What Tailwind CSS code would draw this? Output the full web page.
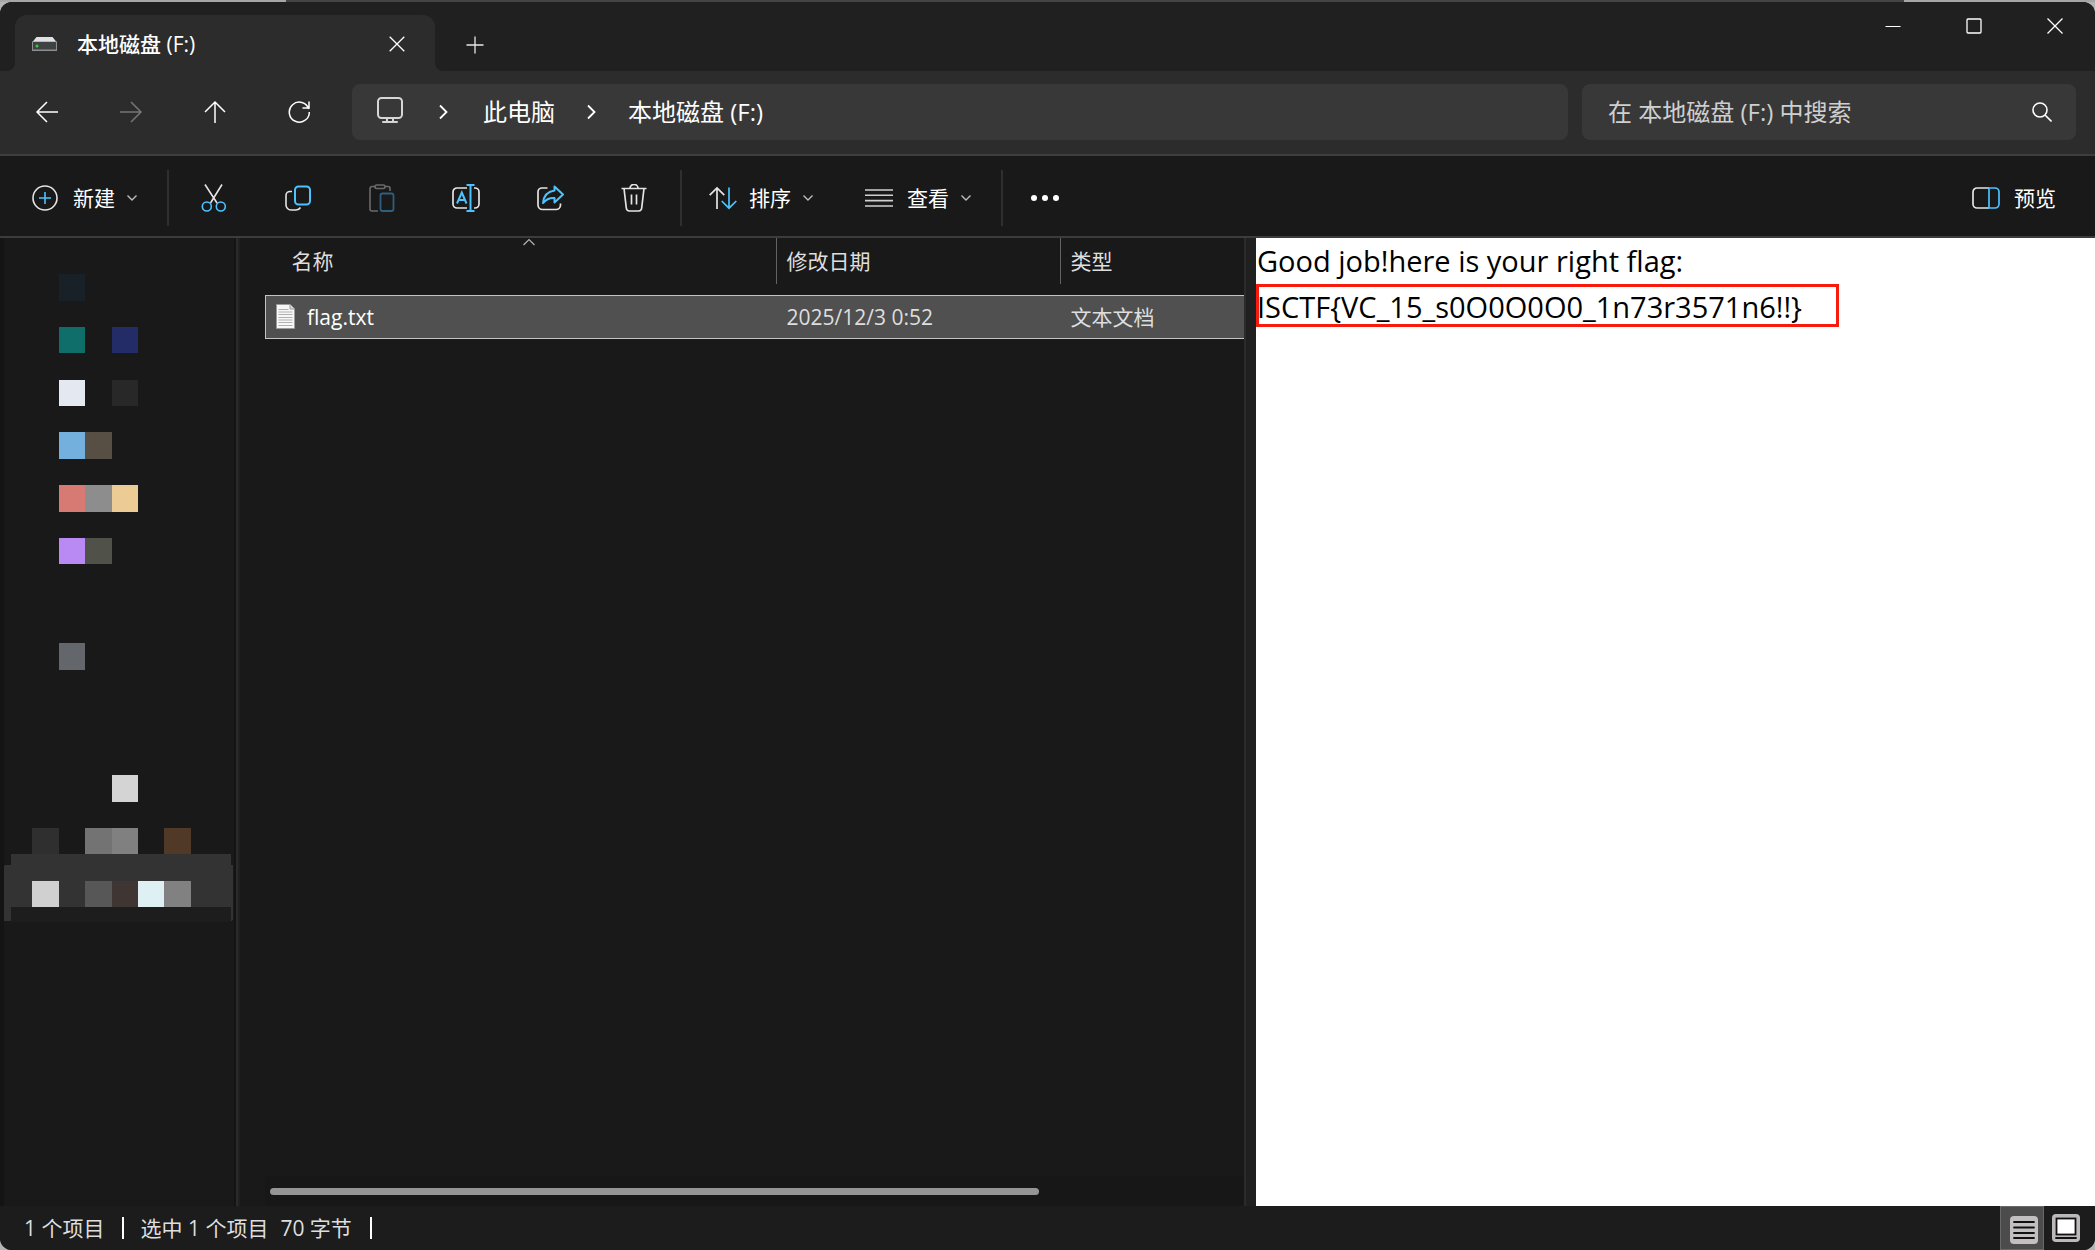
<!DOCTYPE html>
<html lang="zh-CN">
<head>
    <meta charset="UTF-8">
    <meta name="viewport" content="width=device-width, initial-scale=1.0">
    <title>本地磁盘 (F:)</title>
    <script src="https://cdn.jsdelivr.net/npm/@tailwindcss/browser@4"></script>
</head>
<body class="min-h-screen flex flex-col bg-[#b4b4b4] font-['Open_Sans','Noto_Sans_CJK_SC',sans-serif] text-[21px] leading-7 text-white">
    <!-- Desktop edge above the window -->
    <div class="flex h-0.5">
        <div class="w-[286px] bg-[#a6a6a6]"></div>
        <div class="flex-1 bg-[#444444]"></div>
        <div class="w-[191px] bg-[#a6a6a6]"></div>
    </div>

    <div class="flex-1 flex flex-col rounded-xl overflow-hidden bg-[#191919]">
        <!-- Title bar -->
        <header class="flex items-start h-[69px] bg-[#202020]">
            <div class="relative flex items-center ml-[15px] mt-[13px] w-[420px] h-14 pl-[17px] pr-7 pt-0.5 rounded-t-xl bg-[#2c2c2c]">
                <svg class="absolute -left-2 bottom-0 w-2 h-2" viewBox="0 0 8 8" fill="#2c2c2c"><path d="M8 0v8H0a8 8 0 0 0 8-8z"/></svg>
                <svg class="absolute -right-2 bottom-0 w-2 h-2" viewBox="0 0 8 8" fill="#2c2c2c"><path d="M0 0v8h8a8 8 0 0 1-8-8z"/></svg>
                <svg class="w-[25px] h-4" viewBox="0 0 25 16">
                    <path d="M4.500 1h16L24.500 6H.5z" fill="#dfe1e4"/>
                    <path d="M0 5.500h25V15H0z" fill="#8d8f90"/>
                    <path d="M1 6h23v7.500H1z" fill="#3f4243"/>
                    <circle cx="5" cy="10" r="1.500" fill="#2fd03c"/>
                </svg>
                <span class="ml-5 font-medium">本地磁盘 (F:)</span>
                <button class="ml-auto flex items-center justify-center w-5 h-7" aria-label="关闭标签页">
                    <svg class="w-4 h-4" viewBox="0 0 16 16" fill="none" stroke="#fff" stroke-width="1.300"><path d="M.7.7l14.600 14.600M15.300.7L.7 15.300"/></svg>
                </button>
            </div>
            <button class="mt-[13px] w-20 h-[60px] flex items-center justify-center" aria-label="新标签页">
                <svg class="w-[18px] h-[18px]" viewBox="0 0 18 18" fill="none" stroke="#e8e8e8" stroke-width="1.300"><path d="M9 .5v17M.5 9h17"/></svg>
            </button>
            <div class="ml-auto flex">
                <button class="w-[81px] h-12 flex items-center justify-center" aria-label="最小化">
                    <svg class="w-4 h-4" viewBox="0 0 16 16" stroke="#fff" stroke-width="1.200"><path d="M.5 8.500h15"/></svg>
                </button>
                <button class="w-[81px] h-12 flex items-center justify-center" aria-label="最大化">
                    <svg class="w-4 h-4" viewBox="0 0 16 16" fill="none" stroke="#fff" stroke-width="1.300"><rect x="1" y="1" width="14" height="14" rx="1"/></svg>
                </button>
                <button class="w-[81px] h-12 flex items-center justify-center" aria-label="关闭">
                    <svg class="w-4 h-4" viewBox="0 0 16 16" fill="none" stroke="#fff" stroke-width="1.300"><path d="M.5.5l15 15M15.500.5l-15 15"/></svg>
                </button>
            </div>
        </header>

        <!-- Navigation bar -->
        <nav class="flex items-center h-[85px] pl-[5px] pr-[19px] pb-px bg-[#2c2c2c] border-b-2 border-[#3e3e3e]">
            <button class="w-[84px] h-14 flex items-center justify-center" aria-label="后退">
                <svg class="w-6 h-6" viewBox="0 0 24 24" fill="none" stroke="#fff" stroke-width="1.500"><path d="M23 12H2M12 2L2 12l10 10"/></svg>
            </button>
            <button class="w-[84px] h-14 flex items-center justify-center" aria-label="前进" disabled>
                <svg class="w-6 h-6" viewBox="0 0 24 24" fill="none" stroke="#767676" stroke-width="1.500"><path d="M1 12h21M12 2l10 10-10 10"/></svg>
            </button>
            <button class="w-[84px] h-14 flex items-center justify-center" aria-label="上移">
                <svg class="w-6 h-6" viewBox="0 0 24 24" fill="none" stroke="#fff" stroke-width="1.500"><path d="M12 23V2M2 12L12 2l10 10"/></svg>
            </button>
            <button class="w-[84px] h-14 flex items-center justify-center" aria-label="刷新">
                <svg class="w-6 h-6" viewBox="0 0 24 24" fill="none" stroke="#fff" stroke-width="1.500"><path d="M21.800 9A10 10 0 1 0 22.300 12M22 1.500V8h-6.500"/></svg>
            </button>
            <div class="flex items-center flex-1 h-14 ml-[11px] pl-[25px] rounded-lg bg-[#383838] text-2xl">
                <svg class="w-[26px] h-[26px] mb-1" viewBox="0 0 26 26" fill="none" stroke="#d6d6d6" stroke-width="2" stroke-linecap="round"><rect x="1" y="1" width="24" height="20" rx="3.500"/><path d="M10 21v4M16 21v4M6 25h14"/></svg>
                <svg class="w-[9px] h-4 ml-9" viewBox="0 0 9 16" fill="none" stroke="#fff" stroke-width="1.800"><path d="M1 1.500L7.500 8 1 14.500"/></svg>
                <a href="#" class="ml-[35px]">此电脑</a>
                <svg class="w-[9px] h-4 ml-8" viewBox="0 0 9 16" fill="none" stroke="#fff" stroke-width="1.800"><path d="M1 1.500L7.500 8 1 14.500"/></svg>
                <a href="#" class="ml-8">本地磁盘 (F:)</a>
            </div>
            <div class="flex items-center w-[494px] h-14 ml-3.5 pl-[26px] pr-6 rounded-lg bg-[#383838] text-2xl">
                <input type="text" aria-label="搜索" placeholder="在 本地磁盘 (F:) 中搜索" class="flex-1 min-w-0 bg-transparent outline-none placeholder:text-[#cfcfcf]">
                <svg class="w-5 h-5" viewBox="0 0 20 20" fill="none" stroke="#fff" stroke-width="1.600"><circle cx="8" cy="8" r="7"/><path d="M13 13l6.500 6.500"/></svg>
            </div>
        </nav>

        <!-- Command bar -->
        <div class="flex items-center h-[82px] pl-8 pt-1 pr-[39px] border-b-2 border-[#3c3c3c]">
            <button class="flex items-center gap-3">
                <svg class="w-[26px] h-[26px] mr-[3px]" viewBox="0 0 26 26" fill="none" stroke-width="1.600"><circle cx="13" cy="13" r="12" stroke="#e4e4e4"/><path d="M13 7v12M7 13h12" stroke="#4cc2ff"/></svg>
                新建
                <svg class="w-2.5 h-2" viewBox="0 0 10 8" fill="none" stroke="#bdbdbd" stroke-width="1.400"><path d="M.5 1.500L5 6l4.500-4.500"/></svg>
            </button>
            <div class="w-0.5 h-14 ml-[30px] bg-[#2f2f2f]"></div>
            <button class="w-[84px] ml-[3px] flex justify-center" aria-label="剪切">
                <svg class="w-7 h-7" viewBox="0 0 28 28" fill="none" stroke-width="1.600"><path d="M5 .5l12 18.500M22 .5L10.500 19" stroke="#e4e4e4"/><circle cx="6.800" cy="22.500" r="4.500" stroke="#4cc2ff"/><circle cx="20.800" cy="22.500" r="4.500" stroke="#4cc2ff"/></svg>
            </button>
            <button class="w-[84px] flex justify-center" aria-label="复制">
                <svg class="w-7 h-7" viewBox="0 0 28 28" fill="none" stroke-width="1.600"><path d="M8 7.500H6A4 4 0 0 0 2 11.500v9.500a5 5 0 0 0 5 5h5q3 0 4.500-2.500" stroke="#e4e4e4"/><rect x="11" y="2.500" width="15" height="18" rx="3.500" stroke="#4cc2ff" stroke-width="2"/></svg>
            </button>
            <button class="w-[84px] flex justify-center" aria-label="粘贴" disabled>
                <svg class="w-7 h-7" viewBox="0 0 28 28" fill="none" stroke-width="1.600"><path d="M7 2.500H4A2 2 0 0 0 2 4.500V25a2 2 0 0 0 2 2h6M17 2.500h3a2 2 0 0 1 2 2V7" stroke="#6a6a6a"/><rect x="7" y="1" width="10" height="3.500" rx="1.700" stroke="#6a6a6a"/><rect x="12.500" y="9.500" width="13" height="17.500" rx="2" stroke="#2f5f7c" stroke-width="1.800"/></svg>
            </button>
            <button class="w-[84px] flex justify-center" aria-label="重命名">
                <svg class="w-7 h-7" viewBox="0 0 28 28" fill="none" stroke-width="1.700"><path d="M15 4H5a4 4 0 0 0-4 4v12a4 4 0 0 0 4 4h10M22 4h1a4 4 0 0 1 4 4v12a4 4 0 0 1-4 4h-1" stroke="#e4e4e4"/><path d="M5 19.500L9.800 8.500l4.700 11M6.500 16h6.700M14.500 1h8M14.500 27h8M18.500 1v26" stroke="#4cc2ff" stroke-width="2"/></svg>
            </button>
            <button class="w-[84px] flex justify-center" aria-label="共享">
                <svg class="w-7 h-7" viewBox="0 0 28 28" fill="none" stroke-width="1.700" stroke-linejoin="round"><path d="M11.500 4H6a4 4 0 0 0-4 4v13a4.500 4.500 0 0 0 4.500 4.500H20a4.500 4.500 0 0 0 4.500-4.500v-1.500" stroke="#e4e4e4"/><path d="M18.500 2.500L27 10.500l-8.500 8V14q-7-.5-11.500 5 1-11 11.500-12.500z" stroke="#4cc2ff" stroke-width="2"/></svg>
            </button>
            <button class="w-[84px] flex justify-center" aria-label="删除">
                <svg class="w-7 h-7" viewBox="0 0 28 28" fill="none" stroke="#e4e4e4" stroke-width="1.700"><path d="M1.500 4.500h25M10 4a4 3.500 0 0 1 8 0M4 4.500l2.300 19.500a3.300 3.300 0 0 0 3.200 3h9a3.300 3.300 0 0 0 3.200-3L24 4.500M11.500 10.500v10M16.500 10.500v10"/></svg>
            </button>
            <div class="w-0.5 h-14 ml-1 bg-[#2f2f2f]"></div>
            <button class="flex items-center gap-3 ml-[27px]">
                <svg class="w-7 h-6" viewBox="0 0 28 24" fill="none" stroke-width="1.700"><path d="M8 23V2M.7 9.200L8 2l7.300 7.200" stroke="#e4e4e4"/><path d="M20 1.500v21M12.700 15l7.300 7.200L27.300 15" stroke="#4cc2ff"/></svg>
                排序
                <svg class="w-2.5 h-2" viewBox="0 0 10 8" fill="none" stroke="#bdbdbd" stroke-width="1.400"><path d="M.5 1.500L5 6l4.500-4.500"/></svg>
            </button>
            <button class="flex items-center gap-3 ml-[52px]">
                <svg class="w-7 h-[18px] mr-0.5" viewBox="0 0 28 18" stroke="#d0d0d0" stroke-width="1.600"><path d="M0 1h28M0 6.300h28M0 11.600h28M0 17h28"/></svg>
                查看
                <svg class="w-2.5 h-2" viewBox="0 0 10 8" fill="none" stroke="#bdbdbd" stroke-width="1.400"><path d="M.5 1.500L5 6l4.500-4.500"/></svg>
            </button>
            <div class="w-0.5 h-14 ml-[30px] bg-[#2f2f2f]"></div>
            <button class="ml-7" aria-label="查看更多">
                <svg class="w-7 h-2" viewBox="0 0 28 8" fill="#fff"><circle cx="3" cy="4" r="3"/><circle cx="14" cy="4" r="3"/><circle cx="25" cy="4" r="3"/></svg>
            </button>
            <button class="ml-auto flex items-center gap-3.5">
                <svg class="w-7 h-[22px]" viewBox="0 0 28 22" fill="none" stroke-width="1.700"><path d="M17 1H5a4 4 0 0 0-4 4v12a4 4 0 0 0 4 4h12" stroke="#e4e4e4"/><path d="M17 1h6a4 4 0 0 1 4 4v12a4 4 0 0 1-4 4h-6z" stroke="#4cc2ff"/></svg>
                预览
            </button>
        </div>

        <!-- Content -->
        <div class="flex-1 flex">
            <!-- Sidebar, entries pixelated -->
            <aside class="w-[234px] border-l-4 border-[#141414]">
                <svg class="w-[230px] h-[700px]" viewBox="4 238 230 700" shape-rendering="crispEdges">
                    <rect x="59" y="274" width="26" height="27" fill="#182028"/>
                    <rect x="59" y="327" width="26" height="26" fill="#106e6a"/>
                    <rect x="112" y="327" width="26" height="26" fill="#242c68"/>
                    <rect x="59" y="380" width="26" height="26" fill="#e3e8f1"/>
                    <rect x="112" y="380" width="26" height="26" fill="#282828"/>
                    <rect x="59" y="432" width="26" height="27" fill="#73b0dd"/>
                    <rect x="85" y="432" width="27" height="27" fill="#584f44"/>
                    <rect x="59" y="485" width="26" height="27" fill="#d67a73"/>
                    <rect x="85" y="485" width="27" height="27" fill="#8d8d8d"/>
                    <rect x="112" y="485" width="26" height="27" fill="#eccc94"/>
                    <rect x="59" y="538" width="26" height="26" fill="#b98af4"/>
                    <rect x="85" y="538" width="27" height="26" fill="#50524a"/>
                    <rect x="59" y="643" width="26" height="27" fill="#63676b"/>
                    <rect x="112" y="775" width="26" height="27" fill="#d4d4d4"/>
                    <rect x="32" y="828" width="27" height="26" fill="#2f2f2f"/>
                    <rect x="85" y="828" width="27" height="26" fill="#737373"/>
                    <rect x="112" y="828" width="26" height="26" fill="#808080"/>
                    <rect x="164" y="828" width="27" height="26" fill="#503926"/>
                    <rect x="4" y="865" width="229" height="56" rx="2" fill="#333333"/>
                    <rect x="11" y="854" width="220" height="53" fill="#333333"/>
                    <rect x="11" y="907" width="220" height="15" fill="#1d1d1d"/>
                    <rect x="32" y="881" width="27" height="26" fill="#d0d0d0"/>
                    <rect x="85" y="881" width="27" height="26" fill="#575757"/>
                    <rect x="112" y="881" width="26" height="26" fill="#3f3532"/>
                    <rect x="138" y="881" width="26" height="26" fill="#dff0f5"/>
                    <rect x="164" y="881" width="27" height="26" fill="#818181"/>
                </svg>
            </aside>
            <div class="w-1.5 bg-[#2b2b2b] border-x-2 border-l-[#141414] border-r-[#202020]"></div>

            <!-- File list -->
            <main class="flex-1 flex flex-col min-w-0 pl-[25px]">
                <table class="w-full table-fixed text-left">
                    <colgroup>
                        <col class="w-[511px]">
                        <col class="w-[284px]">
                        <col>
                    </colgroup>
                    <thead>
                        <tr class="h-[57px] align-top text-[#dedede]">
                            <th class="p-0 font-normal">
                                <div class="relative ml-4 pl-2.5 h-[46px] leading-[46px] border-r border-[#636363]">
                                    名称
                                    <svg class="absolute top-0 left-1/2 -translate-x-1/2 w-3 h-2" viewBox="0 0 12 8" fill="none" stroke="#b4b4b4" stroke-width="1.200"><path d="M.5 7L6 1.500 11.500 7"/></svg>
                                </div>
                            </th>
                            <th class="p-0 font-normal"><div class="pl-2.5 h-[46px] leading-[46px] border-r border-[#636363]">修改日期</div></th>
                            <th class="p-0 font-normal"><div class="pl-2.5 h-[46px] leading-[46px]">类型</div></th>
                        </tr>
                    </thead>
                    <tbody>
                        <tr class="h-[43px] bg-[#505050] text-[#dedede]">
                            <td class="p-0 border-y border-l border-[#c4c4c4]">
                                <div class="flex items-center gap-3 pl-2.5 text-white">
                                    <svg class="w-[19px] h-[25px]" viewBox="0 0 19 25"><path d="M.5.500h13.500l4.500 4.500v19.500H.5z" fill="#f7f7f7" stroke="#9b9b9b"/><path d="M14 .5V5h4.500" fill="#dcdcdc" stroke="#9b9b9b"/><path d="M2.500 5.500h10M2.500 8h14M2.500 10.500h14M2.500 13.500h14M2.500 16h14M2.500 18.500h14M2.500 21.500h14" stroke="#b0b0b0"/></svg>
                                    flag.txt
                                </div>
                            </td>
                            <td class="p-0 pl-2.5 border-y border-[#c4c4c4]">2025/12/3 0:52</td>
                            <td class="p-0 pl-2.5 border-y border-[#c4c4c4]">文本文档</td>
                        </tr>
                    </tbody>
                </table>
                <div class="mt-auto h-[30px] pt-3 pl-[5px] pr-[205px] bg-[#171717]">
                    <div class="h-[7px] rounded-full bg-[#959595]"></div>
                </div>
            </main>
            <div class="w-3 bg-[#202020] border-l-2 border-[#2b2b2b]"></div>

            <!-- Preview pane -->
            <section class="relative w-[839px] pl-px bg-white text-black text-[29px] leading-[46px]">
                <p>Good job!here is your right flag:</p>
                <p>ISCTF{VC_15_s0O0O0O0_1n73r3571n6!!}</p>
                <div class="absolute left-0 top-[46px] w-[583px] h-[43px] border-3 border-[#f81a0c]"></div>
            </section>
        </div>

        <!-- Status bar -->
        <footer class="flex items-center h-11 pl-6 bg-[#1c1c1c] text-[#dedede]">
            <span>1 个项目</span>
            <span class="w-0.5 h-[22px] ml-[18px] mr-4 bg-white"></span>
            <span>选中 1 个项目</span>
            <span class="ml-3">70 字节</span>
            <span class="w-0.5 h-[22px] ml-[18px] bg-white"></span>
            <div class="ml-auto flex h-full">
                <button class="w-11 pl-1 pt-1 h-full flex items-center justify-center bg-[#4c4c4c] border border-[#686868]" aria-label="详细信息">
                    <svg class="w-7 h-7" viewBox="0 0 28 28"><rect width="28" height="28" rx="4" fill="#c3bfc0"/><path d="M4 6h20M4 11.500h20M4 17h20M4 22h20" stroke="#111" stroke-width="1.800" stroke-linecap="round"/></svg>
                </button>
                <button class="w-[51px] pr-[7px] h-full flex items-center justify-center" aria-label="大缩略图">
                    <svg class="w-7 h-7" viewBox="0 0 28 28"><rect width="28" height="28" rx="4" fill="#bdb9ba"/><rect x="4.500" y="4.500" width="19" height="16" fill="#fff" stroke="#111" stroke-width="1.800"/><path d="M4 24h20" stroke="#111" stroke-width="1.800" stroke-linecap="round"/></svg>
                </button>
            </div>
        </footer>
    </div>
</body>
</html>
